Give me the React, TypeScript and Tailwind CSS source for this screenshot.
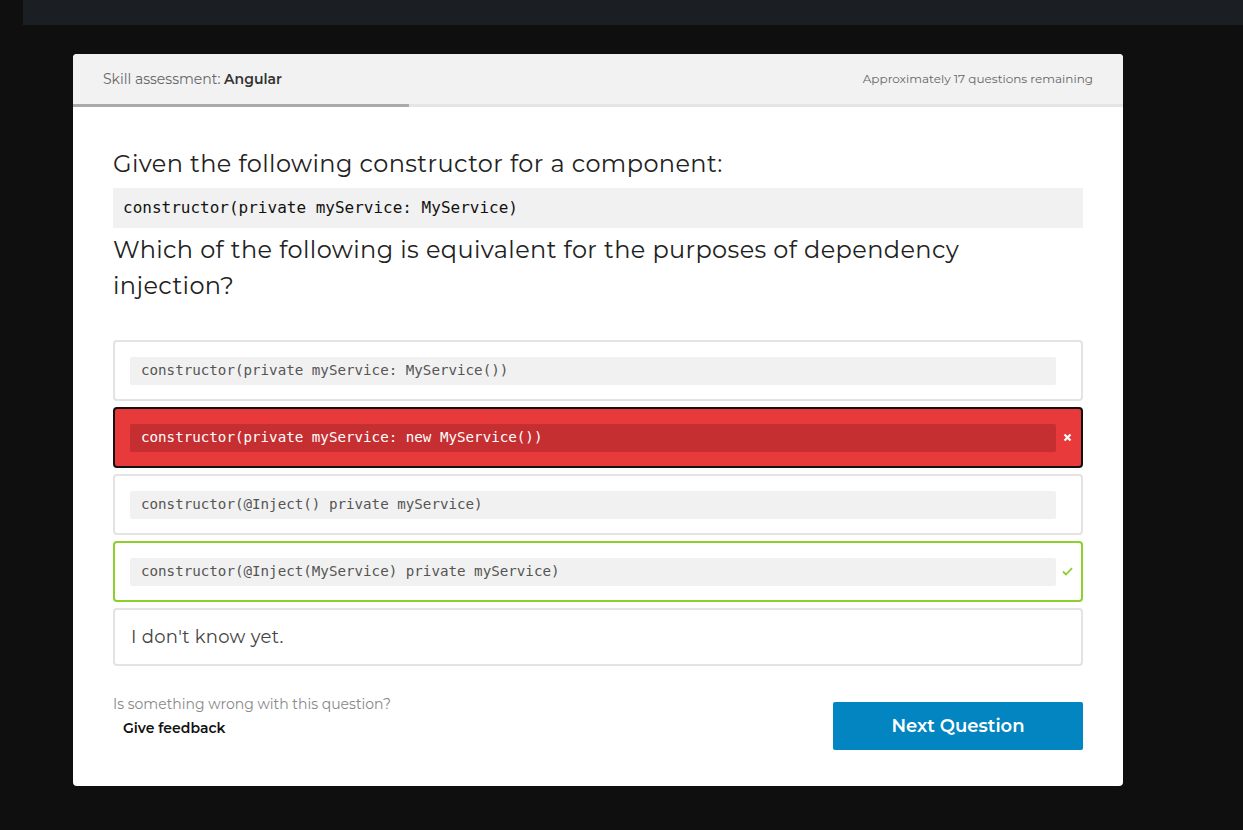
import React from "react";

const mono = { fontFamily: "Consolas, 'DejaVu Sans Mono', 'Liberation Mono', monospace" };

function Option({ code, variant }: { code: string; variant?: "wrong" | "right" }) {
  const box =
    variant === "wrong"
      ? "border-[#111] bg-[#e8393b]"
      : variant === "right"
      ? "border-[#8ccf2e] bg-white"
      : "border-[#e3e3e3] bg-white";
  const inner =
    variant === "wrong" ? "bg-[#c62f32] text-white" : "bg-[#f1f1f1] text-[#555]";
  return (
    <div className={`h-[61px] rounded-[4px] border-2 flex items-center pl-[15px] pr-[4px] ${box}`}>
      <div
        className={`flex-1 h-[28px] rounded-[2px] flex items-center pl-[11px] text-[14.2px] ${inner}`}
        style={mono}
      >
        {code}
      </div>
      <div className="w-[19px] flex justify-center items-center ml-[2px]">
        {variant === "wrong" && (
          <svg width="9" height="9" viewBox="0 0 9 9">
            <path d="M1.5 1.5 L7.5 7.5 M7.5 1.5 L1.5 7.5" stroke="#fff" strokeWidth="2.2" />
          </svg>
        )}
        {variant === "right" && (
          <svg width="11" height="9" viewBox="0 0 11 9">
            <path d="M1 4.5 L4 7.5 L10 1.2" stroke="#8ccf2e" strokeWidth="1.8" fill="none" />
          </svg>
        )}
      </div>
    </div>
  );
}

export default function App() {
  return (
    <div
      className="w-[1243px] h-[830px] bg-[#0f0f0f] overflow-hidden"
      style={{ fontFamily: "Montserrat, 'Noto Sans', Lato, sans-serif" }}
    >
      <div className="ml-[23px] h-[25px] bg-[#1b1e22]" />
      <div className="ml-[73px] mt-[29px] w-[1050px] h-[732px] bg-white rounded-[4px] overflow-hidden">
        <div className="h-[50px] bg-[#f2f2f2] flex items-center justify-between pl-[30px] pr-[30px]">
          <div className="text-[14px] text-[#666]">
            Skill assessment: <span className="font-semibold text-[#333]">Angular</span>
          </div>
          <div className="text-[12px] text-[#666]">Approximately 17 questions remaining</div>
        </div>
        <div className="h-[3px] bg-[#e5e5e5] flex">
          <div className="w-[336px] bg-[#aaaaaa]" />
        </div>
        <div className="px-[40px] pt-[39px]">
          <div className="text-[24px] leading-[36px] text-[#222] tracking-[0.4px]">
            Given the following constructor for a component:
          </div>
          <div
            className="mt-[6px] h-[40px] bg-[#f1f1f1] flex items-center pl-[10px] text-[16px] text-[#111]"
            style={mono}
          >
            constructor(private myService: MyService)
          </div>
          <div className="mt-[4px] text-[24px] leading-[36px] text-[#222] tracking-[0.4px] pr-[100px]">
            Which of the following is equivalent for the purposes of dependency injection?
          </div>
          <div className="mt-[36px] flex flex-col gap-[6px]">
            <Option code="constructor(private myService: MyService())" />
            <Option code="constructor(private myService: new MyService())" variant="wrong" />
            <Option code="constructor(@Inject() private myService)" />
            <Option code="constructor(@Inject(MyService) private myService)" variant="right" />
            <div className="h-[58px] rounded-[4px] border-2 border-[#e3e3e3] flex items-center pl-[16px] text-[18px] tracking-[0.3px] text-[#444]">
              I don't know yet.
            </div>
          </div>
          <div className="mt-[28px] flex justify-between items-start">
            <div>
              <div className="text-[14px] leading-[20px] text-[#888]">Is something wrong with this question?</div>
              <div className="mt-[4px] ml-[10px] text-[14px] leading-[20px] font-semibold text-[#111]">Give feedback</div>
            </div>
            <button className="mt-[8px] w-[250px] h-[48px] bg-[#0285c0] rounded-[2px] text-white text-[18px] font-semibold">
              Next Question
            </button>
          </div>
        </div>
      </div>
    </div>
  );
}
